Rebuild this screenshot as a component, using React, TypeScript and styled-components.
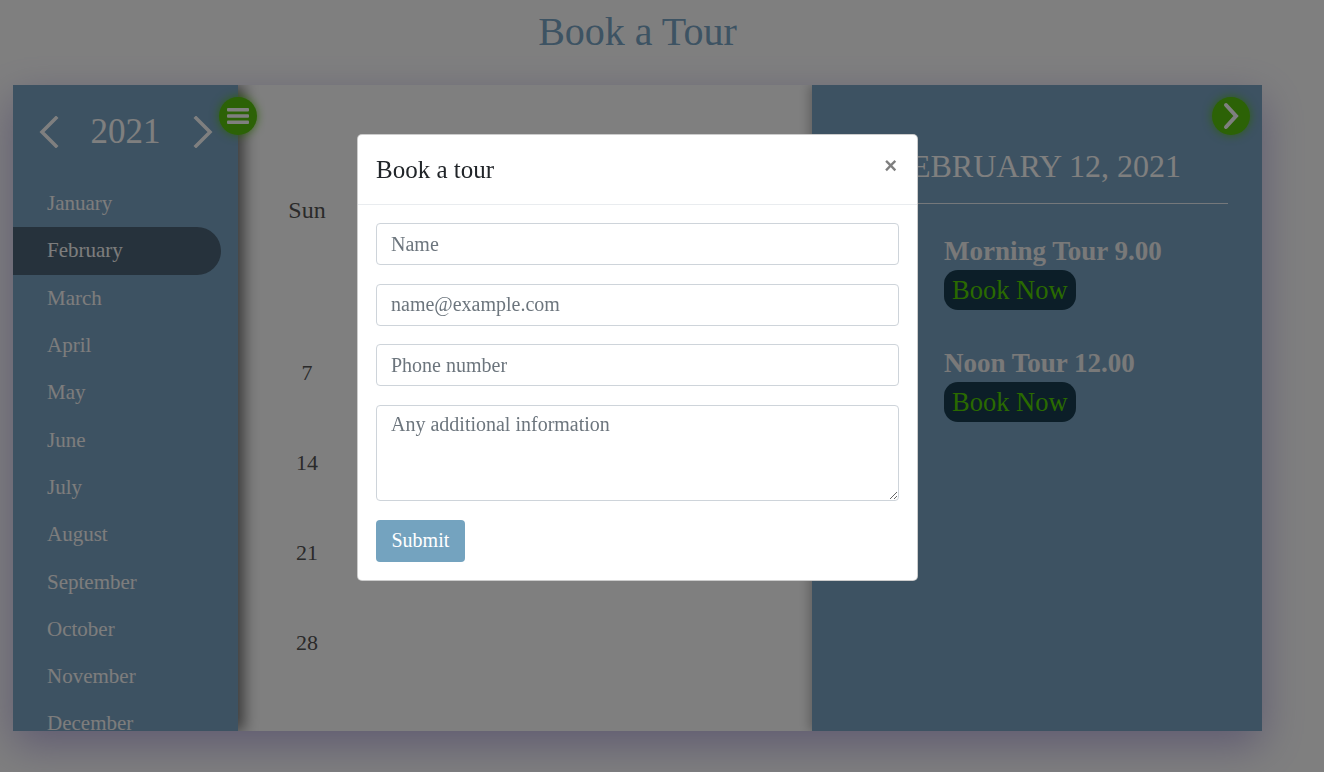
import React from "react";
import styled, { createGlobalStyle } from "styled-components";

const Global = createGlobalStyle`
  html, body { margin: 0; padding: 0; height: 100%; overflow: hidden; background: #ffffff; }
  body { font-family: "Liberation Serif", "Times New Roman", serif; }
  * { box-sizing: border-box; }
`;

const Page = styled.div`
  width: 1275px;
  height: 772px;
  padding: 0 13px;
`;

const Title = styled.h1`
  margin: 0;
  padding-top: 8px;
  height: 85px;
  text-align: center;
  font-weight: 400;
  font-size: 40px;
  line-height: 48px;
  color: #7aa6c6;
`;

const Shell = styled.div`
  display: flex;
  height: 646px;
  overflow: hidden;
  box-shadow: 0 14px 40px rgba(110, 90, 190, 0.45);
`;

const Sidebar = styled.aside`
  position: relative;
  z-index: 2;
  width: 225px;
  flex: none;
  background: #7aa4c4;
  box-shadow: 6px 0 14px rgba(0, 0, 0, 0.55);
  padding-top: 24px;
`;

const YearRow = styled.div`
  display: flex;
  align-items: center;
  justify-content: center;
  gap: 31px;
  height: 46px;
  font-size: 35px;
  color: #ffffff;
`;

const MonthList = styled.ul`
  list-style: none;
  margin: 25px 0 0;
  padding: 0;
`;

const MonthItem = styled.li<{ $active?: boolean }>`
  display: flex;
  align-items: center;
  height: 47.3px;
  padding-left: 34px;
  margin-right: 17px;
  border-radius: 0 24px 24px 0;
  font-size: 21px;
  color: #fafafa;
  background: ${(p) => (p.$active ? "#4c6478" : "transparent")};
`;

const RoundButton = styled.button<{ $side: "left" | "right" }>`
  position: absolute;
  top: 12px;
  ${(p) => (p.$side === "left" ? "right: -19px;" : "right: 12px;")}
  width: 38px;
  height: 38px;
  border-radius: 50%;
  border: none;
  padding: 0;
  display: flex;
  align-items: center;
  justify-content: center;
  background: #58c40c;
  box-shadow: 0 0 10px rgba(88, 196, 12, 0.85);
`;

const Calendar = styled.section`
  flex: 1;
  background: #ffffff;
  padding: 97px 24px 0 32px;
  display: grid;
  grid-template-columns: repeat(7, 1fr);
  grid-template-rows: 56px;
  grid-auto-rows: 90px;
  align-content: start;
`;

const DayHead = styled.div`
  display: flex;
  align-items: center;
  justify-content: center;
  font-size: 24px;
  color: #555555;
`;

const DayCell = styled.div`
  display: flex;
  align-items: center;
  justify-content: center;
  font-size: 22px;
  color: #555555;
`;

const Details = styled.section`
  position: relative;
  width: 450px;
  flex: none;
  background: #7aa4c4;
  box-shadow: -3px 0 10px rgba(0, 0, 0, 0.25);
  padding: 62px 34px 0;
`;

const DateHeading = styled.h2`
  margin: 0;
  text-align: center;
  font-weight: 400;
  font-size: 32px;
  line-height: 38px;
  padding-bottom: 18px;
  border-bottom: 1px solid rgba(255, 255, 255, 0.85);
  color: #ffffff;
`;

const TourList = styled.div`
  padding-left: 98px;
  margin-top: 32px;
  display: flex;
  flex-direction: column;
  gap: 38px;
`;

const Tour = styled.div`
  display: flex;
  flex-direction: column;
  align-items: flex-start;
  gap: 4px;
`;

const TourTitle = styled.div`
  font-weight: 700;
  font-size: 27px;
  line-height: 30px;
  color: #f2f2f2;
`;

const BookButton = styled.button`
  height: 40px;
  padding: 0 8px;
  border: none;
  border-radius: 14px;
  background: #183c50;
  color: #54d400;
  font-family: inherit;
  font-size: 26.5px;
  line-height: 40px;
`;

const Overlay = styled.div`
  position: fixed;
  inset: 0;
  z-index: 10;
  background: rgba(0, 0, 0, 0.5);
`;

const DialogFrame = styled.div`
  width: 1275px;
  padding-top: 134px;
`;

const Modal = styled.div`
  width: 561px;
  margin: 0 auto;
  background: #ffffff;
  border: 1px solid rgba(0, 0, 0, 0.2);
  border-radius: 5px;
`;

const ModalHeader = styled.div`
  display: flex;
  justify-content: space-between;
  align-items: flex-start;
  padding: 18px 20px 18px 18px;
  border-bottom: 1px solid #e9ecef;
`;

const ModalTitle = styled.h5`
  margin: 0;
  font-weight: 400;
  font-size: 25px;
  line-height: 33px;
  color: #212529;
`;

const Close = styled.button`
  margin-top: 2px;
  border: none;
  background: none;
  padding: 0;
  font-family: "Liberation Sans", Arial, sans-serif;
  font-weight: 700;
  font-size: 22px;
  line-height: 22px;
  color: #000000;
  opacity: 0.5;
`;

const ModalBody = styled.form`
  display: flex;
  flex-direction: column;
  gap: 18.7px;
  padding: 18px 18px 18px 18px;
`;

const Field = styled.input`
  height: 42px;
  width: 100%;
  padding: 0 14px;
  border: 1px solid #ced4da;
  border-radius: 4px;
  font-family: inherit;
  font-size: 20px;
  color: #495057;
  &::placeholder { color: #6c757d; }
`;

const Area = styled.textarea`
  height: 96px;
  width: 100%;
  padding: 7px 14px;
  border: 1px solid #ced4da;
  border-radius: 4px;
  font-family: inherit;
  font-size: 20px;
  color: #495057;
  &::placeholder { color: #6c757d; }
`;

const Submit = styled.button`
  align-self: flex-start;
  height: 42px;
  padding: 0 15.5px;
  border: none;
  border-radius: 4px;
  background: #74a3bf;
  color: #ffffff;
  font-family: inherit;
  font-size: 20px;
`;

const Chevron = ({ dir }: { dir: "left" | "right" }) => (
  <svg width="22" height="32" viewBox="0 0 22 32" fill="none">
    <polyline
      points={dir === "left" ? "18,2 4,16 18,30" : "4,2 18,16 4,30"}
      stroke="#ffffff"
      strokeWidth="3.5"
      strokeLinecap="square"
    />
  </svg>
);

const months = [
  "January", "February", "March", "April", "May", "June",
  "July", "August", "September", "October", "November", "December",
];

const days = ["Sun", "Mon", "Tue", "Wed", "Thu", "Fri", "Sat"];
const cells: (number | null)[] = [null, ...Array.from({ length: 28 }, (_, i) => i + 1)];

export default function App() {
  return (
    <>
      <Global />
      <Page>
        <Title>Book a Tour</Title>
        <Shell>
          <Sidebar>
            <RoundButton $side="left" type="button" aria-label="menu">
              <svg width="22" height="18" viewBox="0 0 22 18">
                <rect x="0" y="1" width="22" height="3.4" rx="1" fill="#ffffff" />
                <rect x="0" y="7.3" width="22" height="3.4" rx="1" fill="#ffffff" />
                <rect x="0" y="13.6" width="22" height="3.4" rx="1" fill="#ffffff" />
              </svg>
            </RoundButton>
            <YearRow>
              <Chevron dir="left" />
              <span>2021</span>
              <Chevron dir="right" />
            </YearRow>
            <MonthList>
              {months.map((m) => (
                <MonthItem key={m} $active={m === "February"}>
                  {m}
                </MonthItem>
              ))}
            </MonthList>
          </Sidebar>
          <Calendar>
            {days.map((d) => (
              <DayHead key={d}>{d}</DayHead>
            ))}
            {cells.map((c, i) => (
              <DayCell key={i}>{c ?? ""}</DayCell>
            ))}
          </Calendar>
          <Details>
            <RoundButton $side="right" type="button" aria-label="next">
              <svg width="18" height="28" viewBox="0 0 18 28" fill="none">
                <polyline points="4,3 14,14 4,25" stroke="#ffffff" strokeWidth="4" strokeLinecap="round" />
              </svg>
            </RoundButton>
            <DateHeading>FEBRUARY 12, 2021</DateHeading>
            <TourList>
              <Tour>
                <TourTitle>Morning Tour 9.00</TourTitle>
                <BookButton type="button">Book Now</BookButton>
              </Tour>
              <Tour>
                <TourTitle>Noon Tour 12.00</TourTitle>
                <BookButton type="button">Book Now</BookButton>
              </Tour>
            </TourList>
          </Details>
        </Shell>
      </Page>
      <Overlay>
        <DialogFrame>
          <Modal>
            <ModalHeader>
              <ModalTitle>Book a tour</ModalTitle>
              <Close type="button" aria-label="Close">×</Close>
            </ModalHeader>
            <ModalBody onSubmit={(e) => e.preventDefault()}>
              <Field placeholder="Name" />
              <Field placeholder="name@example.com" />
              <Field placeholder="Phone number" />
              <Area placeholder="Any additional information" />
              <Submit type="submit">Submit</Submit>
            </ModalBody>
          </Modal>
        </DialogFrame>
      </Overlay>
    </>
  );
}
